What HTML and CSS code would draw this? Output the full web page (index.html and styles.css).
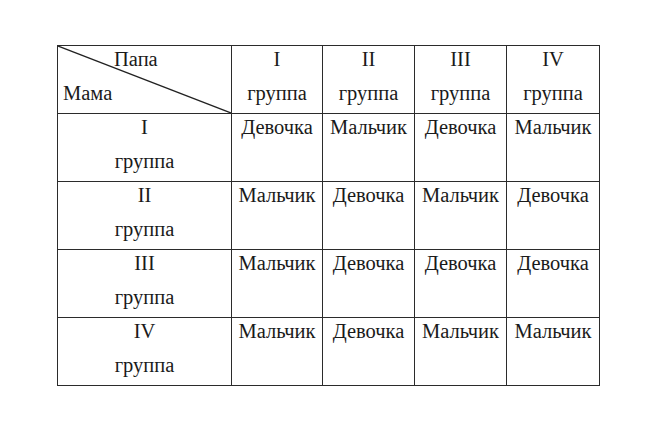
FILE: index.html
```html
<!DOCTYPE html>
<html lang="ru">
<head>
<meta charset="utf-8">
<link rel="stylesheet" href="styles.css">
</head>
<body>
<div class="page">
<table class="grid">
<colgroup>
<col class="c0"><col class="c1"><col class="c2"><col class="c3"><col class="c4">
</colgroup>
<tr>
<td class="corner"><svg class="diag" viewBox="0 0 100 100" preserveAspectRatio="none"><line x1="0" y1="0" x2="100" y2="100" stroke="#222" stroke-width="1.3" vector-effect="non-scaling-stroke"/></svg><div class="in"><div class="papa">Папа</div><div class="mama">Мама</div></div></td>
<td><div class="in">I<br>группа</div></td>
<td><div class="in">II<br>группа</div></td>
<td><div class="in">III<br>группа</div></td>
<td><div class="in">IV<br>группа</div></td>
</tr>
<tr>
<td><div class="in">I<br>группа</div></td>
<td><div class="in">Девочка</div></td><td><div class="in">Мальчик</div></td><td><div class="in">Девочка</div></td><td><div class="in">Мальчик</div></td>
</tr>
<tr>
<td><div class="in">II<br>группа</div></td>
<td><div class="in">Мальчик</div></td><td><div class="in">Девочка</div></td><td><div class="in">Мальчик</div></td><td><div class="in">Девочка</div></td>
</tr>
<tr>
<td><div class="in">III<br>группа</div></td>
<td><div class="in">Мальчик</div></td><td><div class="in">Девочка</div></td><td><div class="in">Девочка</div></td><td><div class="in">Девочка</div></td>
</tr>
<tr>
<td><div class="in">IV<br>группа</div></td>
<td><div class="in">Мальчик</div></td><td><div class="in">Девочка</div></td><td><div class="in">Мальчик</div></td><td><div class="in">Мальчик</div></td>
</tr>
</table>
</div>
</body>
</html>
```
FILE: styles.css
```css
html, body {
  margin: 0;
  padding: 0;
  background: #fff;
}
.page {
  padding: 45px 0 0 57px;
}
.grid {
  border-collapse: collapse;
  table-layout: fixed;
  width: 542px;
  font-family: "Liberation Serif", "Times New Roman", serif;
  font-size: 20.5px;
  color: #1a1a1a;
}
.c0 { width: 174px; }
.c1 { width: 91px; }
.c2 { width: 92px; }
.c3 { width: 92px; }
.c4 { width: 93px; }
.grid td {
  border: 1px solid #2b2b2b;
  height: 67px;
  padding: 0;
  text-align: center;
  vertical-align: top;
  line-height: 34px;
  white-space: nowrap;
}
.in {
  margin-top: -4px;
}
.grid td.corner {
  text-align: left;
  position: relative;
}
.diag {
  position: absolute;
  left: 0;
  top: 0;
  width: 100%;
  height: 100%;
  display: block;
}
.papa { padding-left: 56px; }
.mama { padding-left: 5px; }
```
